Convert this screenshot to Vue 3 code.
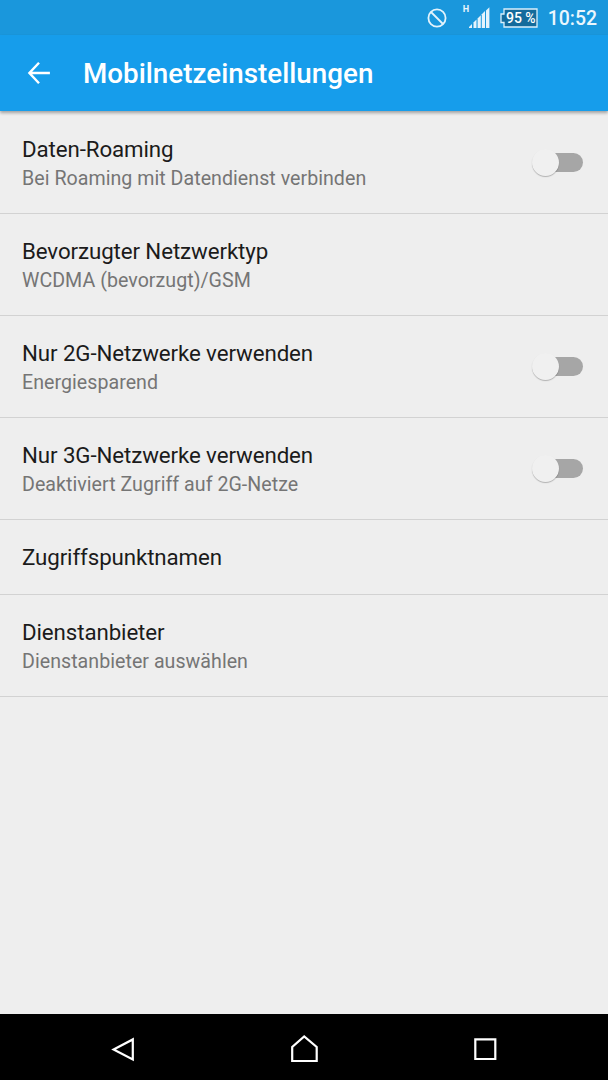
<template>
  <div class="screen">
    <div class="status-bar">
      <svg class="icon-blocked" viewBox="0 0 20 20" aria-hidden="true">
        <circle cx="10" cy="10" r="8.6" />
        <path d="M4 4l12 12" />
      </svg>
      <div class="signal">
        <span class="signal-type">H</span>
        <svg class="signal-bars" viewBox="0 0 22 22" aria-hidden="true">
          <path
            v-for="bar in signalBars"
            :key="bar"
            :d="bar"
          />
        </svg>
      </div>
      <div class="battery">
        <svg class="battery-shape" viewBox="0 0 38 20" aria-hidden="true">
          <path d="M4 1H37V19H4V14.5H1V6H4Z" />
        </svg>
        <span class="battery-level">95 %</span>
      </div>
      <span class="clock">10:52</span>
    </div>

    <header class="app-bar">
      <button type="button" class="back" aria-label="Zurück">
        <svg viewBox="0 0 24 24" aria-hidden="true">
          <path d="M12 1.7L2.4 12L12 22.3M2.6 12H22.9" />
        </svg>
      </button>
      <h1>Mobilnetzeinstellungen</h1>
    </header>

    <main class="settings">
      <div
        v-for="item in items"
        :key="item.title"
        class="row"
        :class="{ single: !item.summary }"
      >
        <div class="row-text">
          <div class="row-title">{{ item.title }}</div>
          <div v-if="item.summary" class="row-summary">{{ item.summary }}</div>
        </div>
        <button
          v-if="item.toggle"
          type="button"
          class="switch"
          :class="{ on: item.checked }"
          role="switch"
          :aria-checked="item.checked"
          :aria-label="item.title"
          @click="item.checked = !item.checked"
        >
          <span class="thumb"></span>
        </button>
      </div>
    </main>

    <nav class="nav-bar">
      <svg viewBox="0 0 32 32" aria-hidden="true">
        <path d="M25.8 6.4V26.4L6.6 16.4Z" />
      </svg>
      <svg viewBox="0 0 32 32" aria-hidden="true">
        <path d="M4.2 28V13.9L16.2 3.4L28.7 13.9V28Z" />
      </svg>
      <svg viewBox="0 0 32 32" aria-hidden="true">
        <path d="M6.3 6.4H26.3V26H6.3Z" />
      </svg>
    </nav>
  </div>
</template>

<script setup>
import { ref } from 'vue'

const signalBars = [
  'M1 21V20L4 17V21Z',
  'M5.5 21V15.6L8.5 12.6V21Z',
  'M9.6 21V11.4L12.8 8.2V21Z',
  'M13.8 21V7.2L17 4V21Z',
  'M18 21V3.5L21.4 .2V21Z'
]

const items = ref([
  {
    title: 'Daten-Roaming',
    summary: 'Bei Roaming mit Datendienst verbinden',
    toggle: true,
    checked: false
  },
  {
    title: 'Bevorzugter Netzwerktyp',
    summary: 'WCDMA (bevorzugt)/GSM'
  },
  {
    title: 'Nur 2G-Netzwerke verwenden',
    summary: 'Energiesparend',
    toggle: true,
    checked: false
  },
  {
    title: 'Nur 3G-Netzwerke verwenden',
    summary: 'Deaktiviert Zugriff auf 2G-Netze',
    toggle: true,
    checked: false
  },
  { title: 'Zugriffspunktnamen' },
  {
    title: 'Dienstanbieter',
    summary: 'Dienstanbieter auswählen'
  }
])
</script>

<style scoped>
.screen {
  display: flex;
  flex-direction: column;
  height: 100vh;
  background: #eeeeee;
  color: #1b1b1b;
  font-family: Roboto, sans-serif;
}

.status-bar {
  display: flex;
  align-items: center;
  height: 35px;
  flex: none;
  box-sizing: border-box;
  padding-right: 11px;
  justify-content: flex-end;
  background: #1a97dc;
  color: #eaf6fd;
}

.icon-blocked {
  width: 20px;
  height: 20px;
  margin-right: 16px;
  fill: none;
  stroke: #e3f3fc;
  stroke-width: 1.8;
}

.signal {
  display: flex;
  align-items: flex-start;
  height: 25px;
  margin-right: 10px;
}

.signal-type {
  width: 5px;
  font-size: 9px;
  font-weight: 700;
  line-height: 9px;
}

.signal-bars {
  width: 22px;
  height: 22px;
  margin-top: 2px;
  fill: #e3f3fc;
}

.battery {
  display: grid;
  width: 38px;
  height: 20px;
  margin-right: 10px;
}

.battery-shape,
.battery-level {
  grid-area: 1 / 1;
}

.battery-shape {
  width: 38px;
  height: 20px;
  fill: #146b9c;
  stroke: #d9effb;
  stroke-width: 1.3;
}

.battery-level {
  padding-left: 4px;
  color: #fff;
  font-size: 14px;
  font-weight: 500;
  line-height: 20px;
  text-align: center;
  white-space: nowrap;
}

.clock {
  padding-top: 2px;
  font-size: 19.4px;
  font-weight: 500;
  line-height: 34px;
}

.app-bar {
  display: flex;
  align-items: center;
  z-index: 1;
  height: 76px;
  flex: none;
  background: #169deb;
  box-shadow: 0 2px 3px rgba(0, 0, 0, 0.32);
}

.back {
  display: grid;
  width: 24px;
  height: 24px;
  margin: 0 32px 0 27px;
  padding: 0;
  border: 0;
  background: none;
  cursor: pointer;
}

.back svg {
  width: 24px;
  height: 24px;
  fill: none;
  stroke: #fff;
  stroke-width: 2.4;
}

h1 {
  margin: 2px 0 0;
  color: #fff;
  font-size: 27.8px;
  font-weight: 500;
  line-height: 36px;
}

.settings {
  flex: 1;
  padding-top: 1px;
}

.row {
  display: flex;
  align-items: center;
  justify-content: space-between;
  height: 102px;
  box-sizing: border-box;
  padding: 0 25px 0 22px;
  border-bottom: 1px solid #d2d2d2;
}

.row.single {
  height: 75px;
}

.row-title {
  font-size: 22.3px;
  letter-spacing: -0.1px;
  line-height: 30px;
}

.row-summary {
  margin: 1px 0 -1px;
  color: #757575;
  font-size: 19.6px;
  letter-spacing: 0.04px;
  line-height: 27px;
}

.switch {
  display: flex;
  align-items: center;
  width: 47px;
  height: 19px;
  padding: 0;
  border: 0;
  border-radius: 10px;
  background: #a6a6a6;
  cursor: pointer;
}

.thumb {
  width: 27px;
  height: 27px;
  flex: none;
  margin-left: -4px;
  border-radius: 50%;
  background: #f0f0f0;
  box-shadow: 0 1px 1px rgba(0, 0, 0, 0.25);
}

.switch.on {
  justify-content: flex-end;
  background: #8bcef5;
}

.switch.on .thumb {
  background: #169deb;
}

.nav-bar {
  display: flex;
  align-items: center;
  justify-content: space-between;
  height: 66px;
  flex: none;
  box-sizing: border-box;
  padding: 4px 107px 0;
  background: #000;
}

.nav-bar svg {
  width: 32px;
  height: 32px;
  fill: none;
  stroke: #fff;
  stroke-width: 2.2;
}
</style>

<style>
body {
  margin: 0;
  background: #eeeeee;
}
</style>
